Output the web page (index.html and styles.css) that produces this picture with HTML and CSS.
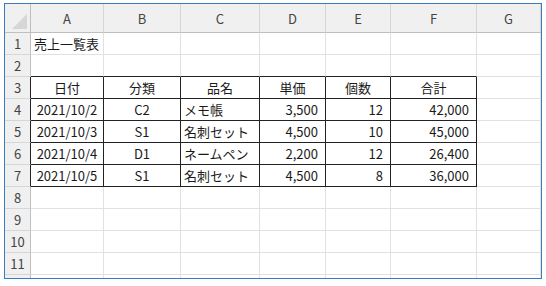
FILE: index.html
```html
<!DOCTYPE html>
<html lang="ja">
<head>
<meta charset="utf-8">
<link rel="stylesheet" href="styles.css">
</head>
<body>
<div class="sheet">
  <div class="row hdr">
    <div class="corner"><svg width="15" height="15" viewBox="0 0 15 15"><polygon points="15,0 15,15 0,15" fill="#d6d6d6"/></svg></div>
    <div class="ch">A</div><div class="ch">B</div><div class="ch">C</div><div class="ch">D</div><div class="ch">E</div><div class="ch">F</div><div class="ch">G</div>
  </div>
  <div class="row">
    <div class="rh">1</div><div class="c l">売上一覧表</div><div class="c"></div><div class="c"></div><div class="c"></div><div class="c"></div><div class="c"></div><div class="c"></div>
  </div>
  <div class="row">
    <div class="rh">2</div><div class="c tb"></div><div class="c tb"></div><div class="c tb"></div><div class="c tb"></div><div class="c tb"></div><div class="c tb"></div><div class="c"></div>
  </div>
  <div class="row">
    <div class="rh dk">3</div><div class="c d m">日付</div><div class="c d m">分類</div><div class="c d m">品名</div><div class="c d m">単価</div><div class="c d m">個数</div><div class="c d m">合計</div><div class="c"></div>
  </div>
  <div class="row">
    <div class="rh dk">4</div><div class="c d m">2021/10/2</div><div class="c d m">C2</div><div class="c d l">メモ帳</div><div class="c d r">3,500</div><div class="c d r">12</div><div class="c d r">42,000</div><div class="c"></div>
  </div>
  <div class="row">
    <div class="rh dk">5</div><div class="c d m">2021/10/3</div><div class="c d m">S1</div><div class="c d l">名刺セット</div><div class="c d r">4,500</div><div class="c d r">10</div><div class="c d r">45,000</div><div class="c"></div>
  </div>
  <div class="row">
    <div class="rh dk">6</div><div class="c d m">2021/10/4</div><div class="c d m">D1</div><div class="c d l">ネームペン</div><div class="c d r">2,200</div><div class="c d r">12</div><div class="c d r">26,400</div><div class="c"></div>
  </div>
  <div class="row">
    <div class="rh dk">7</div><div class="c d m">2021/10/5</div><div class="c d m">S1</div><div class="c d l">名刺セット</div><div class="c d r">4,500</div><div class="c d r">8</div><div class="c d r">36,000</div><div class="c"></div>
  </div>
  <div class="row">
    <div class="rh">8</div><div class="c"></div><div class="c"></div><div class="c"></div><div class="c"></div><div class="c"></div><div class="c"></div><div class="c"></div>
  </div>
  <div class="row">
    <div class="rh">9</div><div class="c"></div><div class="c"></div><div class="c"></div><div class="c"></div><div class="c"></div><div class="c"></div><div class="c"></div>
  </div>
  <div class="row">
    <div class="rh">10</div><div class="c"></div><div class="c"></div><div class="c"></div><div class="c"></div><div class="c"></div><div class="c"></div><div class="c"></div>
  </div>
  <div class="row">
    <div class="rh">11</div><div class="c"></div><div class="c"></div><div class="c"></div><div class="c"></div><div class="c"></div><div class="c"></div><div class="c"></div>
  </div>
  <div class="row part">
    <div class="rh"></div><div class="c"></div><div class="c"></div><div class="c"></div><div class="c"></div><div class="c"></div><div class="c"></div><div class="c"></div>
  </div>
</div>
</body>
</html>
```
FILE: styles.css
```css
* { box-sizing: border-box; }
html, body { margin: 0; padding: 0; background: #fff; }
body { padding: 3px 0 0 4px; font-family: "Noto Sans CJK JP", "Noto Sans", sans-serif; font-size: 13px; color: #1a1a1a; }
.sheet { width: 538px; border: 1px solid #3b7cc0; background: #fff; overflow: hidden; }
.row { display: grid; grid-template-columns: 26px 73px 77px 79px 66px 65px 86px 64px; height: 22px; }
.row.hdr { height: 29px; }
.row.part { height: 3px; }
.row > div { display: flex; align-items: center; border-right: 1px solid #e1e1e1; border-bottom: 1px solid #e1e1e1; white-space: nowrap; overflow: hidden; line-height: 1; }
.row.part > div { border-bottom: none; }
.hdr > div { background: #f0f0f0; border-bottom: 1px solid #bfbfbf; border-right: 1px solid #d6d6d6; justify-content: center; color: #444; }
.hdr > .corner { justify-content: flex-end; align-items: flex-end; padding: 0 3px 3px 0; border-right: 1px solid #bfbfbf; }
.row > .rh { background: #f0f0f0; border-right: 1px solid #bfbfbf; border-bottom: 1px solid #d6d6d6; justify-content: center; color: #444; }
.row > .rh.dk { border-right-color: #222; }
.row > .tb { border-bottom-color: #222; }
.row > .d { border-right-color: #222; border-bottom-color: #222; }
.m { justify-content: center; }
.l { justify-content: flex-start; padding-left: 3px; }
.r { justify-content: flex-end; padding-right: 7px; }
```
